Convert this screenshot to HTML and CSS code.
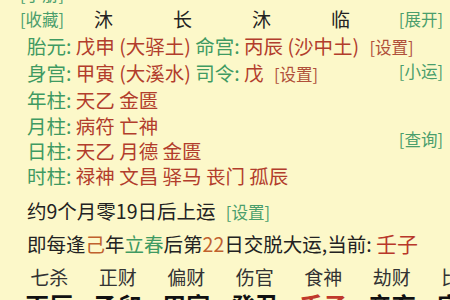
FILE: index.html
```html
<!doctype html>
<html><head><meta charset="utf-8"/><meta name="viewport" content="width=device-width, initial-scale=1"/>
<link rel="stylesheet" href="styles.css">
<title>排盘</title>
</head>
<body>
	<div class="page">
		<div class="row top"><span class="link">[手册]</span></div>

		<div class="row star">
			<span class="link">[收藏]</span>
			<span class="cs">沐</span>
			<span class="cs">长</span>
			<span class="cs">沐</span>
			<span class="cs">临</span>
			<span class="link right">[展开]</span>
		</div>

		<div class="info">
			<div class="lines">
				<div class="line"><span class="lab">胎元:</span> <span class="red">戊申 (大驿土)</span> <span class="lab">命宫:</span> <span class="red">丙辰 (沙中土)</span> <span class="set">[设置]</span></div>
				<div class="line"><span class="lab">身宫:</span> <span class="red">甲寅 (大溪水)</span> <span class="lab">司令:</span> <span class="red">戊</span> <span class="set">[设置]</span></div>
				<div class="line"><span class="lab">年柱:</span> <span class="red">天乙 金匮</span></div>
				<div class="line"><span class="lab">月柱:</span> <span class="red">病符 亡神</span></div>
				<div class="line"><span class="lab">日柱:</span> <span class="red">天乙 月德 金匮</span></div>
				<div class="line"><span class="lab">时柱:</span> <span class="red">禄神 文昌 驿马 丧门 孤辰</span></div>
			</div>
			<div class="side">
				<span class="link xiao">[小运]</span>
				<span class="link cha">[查询]</span>
			</div>
		</div>

		<div class="line yun">约9个月零19日后上运 <span class="link">[设置]</span></div>
		<div class="line jiao">即每逢<span class="brown">己</span>年<span class="green">立春</span>后第<span class="brown">22</span>日交脱大运,当前: <span class="now">壬子</span></div>

		<div class="dayun">
			<span>七杀</span><span>正财</span><span>偏财</span><span>伤官</span><span>食神</span><span>劫财</span><span>比肩</span>
			<b>丙辰</b><b>乙卯</b><b>甲寅</b><b>癸丑</b><b class="cur">壬子</b><b>辛亥</b><b>庚戌</b>
		</div>
	</div>
</body>
</html>
```

FILE: styles.css
```css
* { box-sizing:border-box; }
html, body { margin:0; padding:0; }
body { background-color:#fcf8c9; color:#222; font-family:"Noto Sans CJK SC", "Noto Sans", sans-serif; font-size:19.5px; overflow:hidden; width:450px; height:300px; }

.page { margin-top:-20px; padding-left:27px; width:450px; }

.row { height:26px; line-height:26px; }
.top { margin-left:-7px; }
.star { display:grid; grid-template-columns:44px repeat(4, 79px) 1fr; margin-left:-7px; padding-right:7px; }
.link { color:#4a9e6c; font-size:16.5px; white-space:nowrap; }
.star .cs { text-align:center; color:#222; font-size:19px; }
.right { text-align:right; }

.info { display:flex; margin-top:1px; }
.lines { flex:1; min-width:0; }
.line { line-height:25.2px; white-space:nowrap; }
.lab { color:#3f9a62; }
.red { color:#b23d2c; }
.set { color:#b0503a; font-size:16.5px; margin-left:6px; }

.side { flex:none; display:flex; flex-direction:column; align-items:flex-end; padding-right:7px; line-height:20px; }
.xiao { margin-top:28px; }
.cha { margin-top:48px; }

.yun { margin-top:9px; line-height:28px; }
.yun .link { margin-left:6px; }
.jiao { line-height:32px; margin-top:1px; }
.brown { color:#c0612e; }
.green { color:#3f9a62; }
.now { color:#b8372a; font-size:21px; }

.dayun { display:grid; grid-template-columns:repeat(7, 68.5px); margin-left:-12px; margin-top:3px; }
.dayun span { text-align:center; color:#333; font-size:19px; line-height:27px; }
.dayun b { text-align:center; font-size:24px; line-height:30px; color:#111; }
.dayun .cur { color:#c0392b; }
```
